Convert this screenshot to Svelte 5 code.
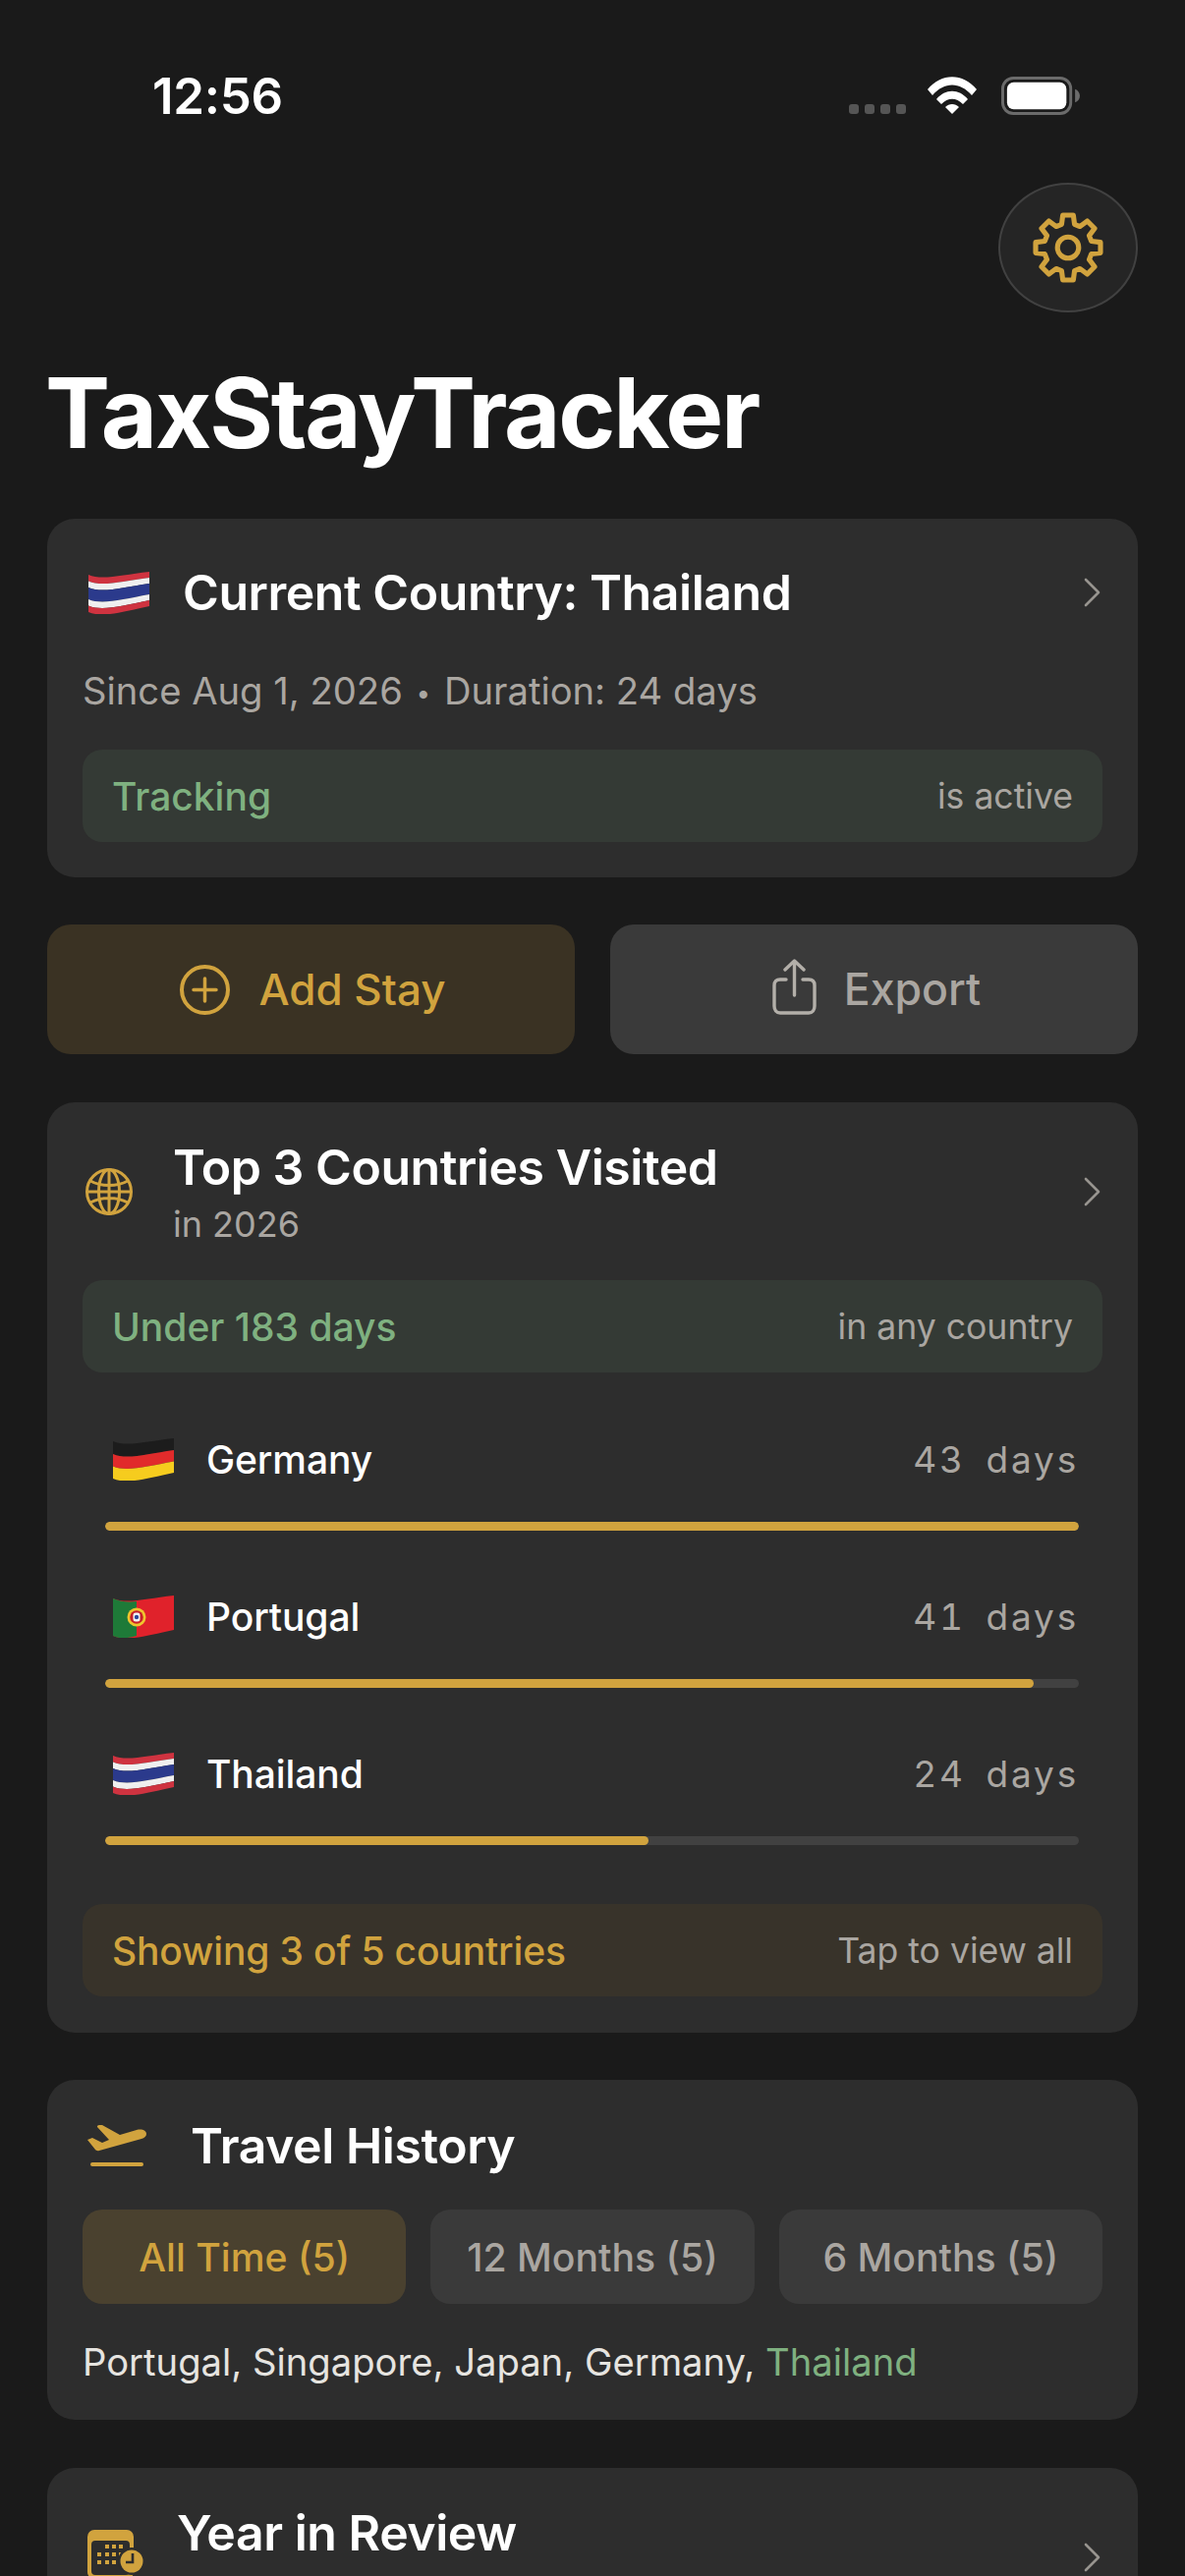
<script>
  const top3 = [
    { name: 'Germany', days: 43, flag: 'de' },
    { name: 'Portugal', days: 41, flag: 'pt' },
    { name: 'Thailand', days: 24, flag: 'th' }
  ];
  const maxDays = Math.max(...top3.map((c) => c.days));
  const tabs = ['12 Months (5)', '6 Months (5)'];

  // wavy band across a 62 wide flag, t0 and t1 run 0..1 down the cloth
  function band(t0, t1) {
    const a = 4 + 38 * t0;
    const b = 4 + 38 * t1;
    return `M0 ${a}C14 ${a + 6} 34 ${a} 62 ${a - 3 - 3 * t0}V${b - 3 - 3 * t1}C34 ${b} 14 ${b + 6} 0 ${b}Z`;
  }

  const stripes = {
    th: [
      ['#cf3340', 0, 0.17],
      ['#efefef', 0.17, 0.34],
      ['#2b3a8c', 0.34, 0.66],
      ['#efefef', 0.66, 0.83],
      ['#cf3340', 0.83, 1]
    ],
    de: [
      ['#1c1c1c', 0, 0.34],
      ['#e12b2b', 0.34, 0.67],
      ['#f6cc1e', 0.67, 1]
    ]
  };

  // 8 tooth gear outline, centre 36,36
  function gearPath() {
    const pts = [];
    for (let i = 0; i < 8; i++) {
      const a = (i * Math.PI) / 4 - Math.PI / 2;
      for (const [off, r] of [[-0.27, 24], [-0.16, 32.5], [0.16, 32.5], [0.27, 24]]) {
        pts.push(`${(36 + r * Math.cos(a + off)).toFixed(1)} ${(36 + r * Math.sin(a + off)).toFixed(1)}`);
      }
    }
    return 'M' + pts.join('L') + 'Z';
  }
</script>

{#snippet flag(code)}
  <svg class="flag" viewBox="0 0 62 44">
    {#if code === 'pt'}
      <path d={band(0, 1)} fill="#e0222b" />
      <path d="M0 4C8 7.5 16 8 24 7V42C16 44 8 46 0 42Z" fill="#1e7a38" />
      <circle cx="24" cy="23" r="9.5" fill="#f0c52e" />
      <circle cx="24" cy="23" r="6.8" fill="#c8202a" />
      <rect x="20.5" y="18.5" width="7" height="9" rx="2.5" fill="#f4f4f4" />
      <circle cx="24" cy="23" r="2.2" fill="#2c479b" />
    {:else}
      {#each stripes[code] as [color, t0, t1]}
        <path d={band(t0, t1)} fill={color} />
      {/each}
    {/if}
  </svg>
{/snippet}

{#snippet chevron()}
  <svg class="chevron" viewBox="0 0 17 30" fill="none">
    <path d="M2 2L15 15L2 28" stroke="#97948f" stroke-width="2.6" stroke-linecap="round" stroke-linejoin="round" />
  </svg>
{/snippet}

<div class="screen">
  <div class="status">
    <span class="time">12:56</span>
    <div class="status-icons">
      <div class="dots"><i></i><i></i><i></i><i></i></div>
      <svg class="wifi" viewBox="0 0 50 38">
        <path d="M0 13C14 -4 36 -4 50 13L45 19C33 5 17 5 5 19Z" fill="#fff" />
        <path d="M9 23C18 12 32 12 41 23L36 28C29 21 21 21 14 28Z" fill="#fff" />
        <path d="M18 31C22 27 28 27 32 31L25 38Z" fill="#fff" />
      </svg>
      <svg class="battery" viewBox="0 0 82 40">
        <rect x="1.5" y="1.5" width="71" height="37" rx="11" fill="none" stroke="#6b6b6b" stroke-width="3" />
        <rect x="6" y="6" width="62" height="28" rx="7" fill="#fff" />
        <path d="M77 13C80 14 82 17 82 20S80 26 77 27Z" fill="#6b6b6b" />
      </svg>
    </div>
  </div>

  <div class="toolbar">
    <button class="gear" aria-label="Settings">
      <svg viewBox="0 0 72 72" fill="none" stroke="#d1a33e" stroke-linejoin="round">
        <path d={gearPath()} stroke-width="5" />
        <circle cx="36" cy="36" r="10.5" stroke-width="5" />
      </svg>
    </button>
  </div>

  <h1>TaxStayTracker</h1>

  <section class="card current">
    <div class="head">
      <span class="lead w-102">{@render flag('th')}</span>
      <h2>Current Country: Thailand</h2>
      {@render chevron()}
    </div>
    <p class="since">Since Aug 1, 2026 <span class="sep">•</span> Duration: 24 days</p>
    <div class="pill green"><span>Tracking</span><small>is active</small></div>
  </section>

  <div class="actions">
    <button class="action add">
      <svg class="plus" viewBox="0 0 51 51" fill="none" stroke="#d1a33e">
        <circle cx="25.5" cy="25.5" r="23.5" stroke-width="4" />
        <path d="M14 25.5H37M25.5 14V37" stroke-width="3.5" stroke-linecap="round" />
      </svg>
      Add Stay
    </button>
    <button class="action export">
      <svg class="share" viewBox="0 0 45 57" fill="none" stroke="#b3afa9" stroke-width="3.4" stroke-linecap="round" stroke-linejoin="round">
        <path d="M14 21H8C4 21 2 23 2 27V48C2 52 4 55 8 55H37C41 55 43 52 43 48V27C43 23 41 21 37 21H31" />
        <path d="M22.5 37V3M13 11L22.5 2L32 11" />
      </svg>
      Export
    </button>
  </div>

  <section class="card top">
    <div class="head tall">
      <span class="lead w-93">
        <svg class="globe" viewBox="0 0 48 48" fill="none" stroke="#d1a33e" stroke-width="3">
          <circle cx="24" cy="24" r="22.5" />
          <ellipse cx="24" cy="24" rx="10.5" ry="22.5" />
          <path d="M24 1.5V46.5M1.5 24H46.5M5 13C16 19 32 19 43 13M5 35C16 29 32 29 43 35" />
        </svg>
      </span>
      <div class="titles">
        <h2>Top 3 Countries Visited</h2>
        <p>in 2026</p>
      </div>
      {@render chevron()}
    </div>
    <div class="pill green under"><span>Under 183 days</span><small>in any country</small></div>
    <div class="rows">
      {#each top3 as c}
        <div class="row">
          <div class="row-line">
            {@render flag(c.flag)}
            <span class="name">{c.name}</span>
            <span class="days">{c.days} days</span>
          </div>
          <div class="track"><div class="fill" style="width: {(c.days / maxDays) * 100}%"></div></div>
        </div>
      {/each}
    </div>
    <div class="pill gold"><span class="showing">Showing 3 of 5 countries</span><small>Tap to view all</small></div>
  </section>

  <section class="card history">
    <div class="head">
      <span class="lead w-110">
        <svg class="plane" viewBox="0 0 60 42" fill="#d1a33e">
          <path d="M0 15L5 13L15 18L22 15L10 2C9.5 1 10.5 0 12 0H15L33 10L50 5C56 3.5 60 6 60 9C60 11.5 58 13 55 14L12 26C10 26.5 9 26 8 25Z" />
          <rect x="3" y="38" width="54" height="4" rx="2" />
        </svg>
      </span>
      <h2>Travel History</h2>
    </div>
    <div class="tabs">
      <button class="tab active">All Time (5)</button>
      {#each tabs as t}
        <button class="tab">{t}</button>
      {/each}
    </div>
    <p class="visited">Portugal, Singapore, Japan, Germany, <em>Thailand</em></p>
  </section>

  <section class="card review">
    <div class="head tall">
      <span class="lead w-96">
        <svg class="calendar" viewBox="0 0 57 57">
          <rect width="47" height="50" rx="7" fill="#d1a33e" />
          <rect x="4" y="11" width="39" height="35" rx="4" fill="#2d2d2d" />
          <g fill="#d1a33e">
            <rect x="18" y="15" width="4" height="4" /><rect x="25" y="15" width="4" height="4" /><rect x="32" y="15" width="4" height="4" />
            <rect x="10" y="23" width="4" height="4" /><rect x="18" y="23" width="4" height="4" /><rect x="25" y="23" width="4" height="4" /><rect x="32" y="23" width="4" height="4" />
            <rect x="10" y="31" width="4" height="4" /><rect x="18" y="31" width="4" height="4" /><rect x="25" y="31" width="4" height="4" />
          </g>
          <circle cx="45" cy="32" r="14" fill="#2d2d2d" />
          <circle cx="45" cy="32" r="11.5" fill="#d1a33e" />
          <path d="M46 24V33H39" fill="none" stroke="#2d2d2d" stroke-width="2.6" />
        </svg>
      </span>
      <div class="titles"><h2>Year in Review</h2></div>
      {@render chevron()}
    </div>
  </section>
</div>

<style>
  :global(body) {
    background: #1a1a1a;
  }

  .screen {
    height: 2622px;
    overflow: hidden;
    padding: 0 48px;
    box-sizing: border-box;
    background: #1a1a1a;
    color: #fff;
    font-family: Inter, 'Liberation Sans', sans-serif;
  }

  button {
    font-family: inherit;
    border: 0;
    padding: 0;
  }

  h1,
  h2,
  p {
    margin: 0;
  }

  .status {
    height: 186px;
    box-sizing: border-box;
    padding: 70px 58px 0 107px;
    display: flex;
    justify-content: space-between;
    align-items: flex-start;
  }

  .time {
    font-size: 51px;
    font-weight: 600;
    line-height: 56px;
    letter-spacing: -0.3px;
  }

  .status-icons {
    display: flex;
    align-items: flex-start;
    padding-top: 8px;
  }

  .dots {
    display: flex;
    gap: 6px;
    margin-top: 28px;
    margin-right: 22px;
  }

  .dots i {
    width: 10px;
    height: 10px;
    border-radius: 3px;
    background: #555;
  }

  .wifi {
    width: 50px;
    height: 38px;
    margin-right: 24px;
  }

  .battery {
    width: 82px;
    height: 39px;
  }

  .toolbar {
    display: flex;
    justify-content: flex-end;
  }

  .gear {
    width: 142px;
    height: 132px;
    border-radius: 50%;
    background: #252525;
    border: 2px solid #414141;
    box-sizing: border-box;
    display: flex;
    align-items: center;
    justify-content: center;
  }

  .gear svg {
    width: 74px;
    height: 74px;
  }

  h1 {
    margin: 42px 0 48px -2px;
    font-size: 99px;
    line-height: 120px;
    font-weight: 700;
    letter-spacing: -2.2px;
  }

  .card {
    background: #2d2d2d;
    border-radius: 28px;
    padding: 0 36px;
    margin-bottom: 49px;
  }

  .head {
    display: flex;
    align-items: center;
    height: 60px;
  }

  .head.tall {
    height: 110px;
  }

  .lead {
    flex: none;
    display: flex;
    align-items: center;
    padding-left: 6px;
    box-sizing: border-box;
  }

  .w-102 {
    width: 102px;
  }

  .w-93 {
    width: 92px;
    padding-left: 3px;
  }

  .w-110 {
    width: 110px;
    padding-left: 5px;
  }

  .w-96 {
    width: 96px;
    padding-left: 5px;
  }

  .flag {
    width: 62px;
    height: 44px;
    flex: none;
  }

  h2 {
    font-size: 50px;
    line-height: 60px;
    font-weight: 600;
    letter-spacing: -0.45px;
  }

  .titles {
    align-self: flex-start;
  }

  .titles p {
    margin-top: 6px;
    font-size: 36px;
    line-height: 44px;
    color: #aaa6a1;
  }

  .chevron {
    width: 17px;
    height: 30px;
    margin-left: auto;
    margin-right: 2px;
    flex: none;
  }

  .pill {
    height: 94px;
    border-radius: 20px;
    padding: 0 30px;
    display: flex;
    align-items: center;
    justify-content: space-between;
    font-size: 39px;
    font-weight: 500;
  }

  .pill small {
    font-size: 35.6px;
    font-weight: 400;
    color: #aaa6a1;
  }

  .green {
    background: #343a35;
    color: #7fb180;
  }

  .under {
    margin-top: 35px;
  }

  .gold {
    background: #38332a;
    color: #d1a33e;
  }

  .showing {
    letter-spacing: -0.15px;
  }

  .current {
    padding-top: 45px;
    padding-bottom: 36px;
    margin-bottom: 48px;
  }

  .since {
    height: 50px;
    margin: 45px 0 35px;
    font-size: 38.2px;
    line-height: 50px;
    color: #aaa6a1;
  }

  .sep {
    font-size: 26px;
    line-height: 0;
    vertical-align: 2px;
    padding: 0 3px;
  }

  .actions {
    display: grid;
    grid-template-columns: 1fr 1fr;
    gap: 36px;
    margin-bottom: 49px;
  }

  .action {
    height: 132px;
    border-radius: 24px;
    display: flex;
    align-items: center;
    justify-content: center;
    font-weight: 500;
  }

  .add {
    background: #3a3223;
    color: #d1a33e;
    gap: 29px;
    font-size: 44px;
    padding-left: 4px;
  }

  .export {
    background: #3a3a3a;
    color: #aaa6a1;
    gap: 28px;
    font-size: 44.6px;
    padding-left: 5px;
  }

  .plus {
    width: 51px;
    height: 51px;
  }

  .share {
    width: 45px;
    height: 57px;
    margin-top: -6px;
  }

  .top {
    padding-top: 36px;
    padding-bottom: 37px;
    margin-bottom: 48px;
  }

  .globe {
    width: 48px;
    height: 48px;
  }

  .rows {
    padding: 58px 24px 60px 23px;
    display: grid;
    gap: 57px;
  }

  .row-line {
    height: 60px;
    display: flex;
    align-items: center;
    padding: 0 0 0 8px;
    margin-bottom: 34px;
  }

  .name {
    margin-left: 33px;
    font-size: 39px;
    font-weight: 500;
    letter-spacing: -0.1px;
  }

  .days {
    margin-left: auto;
    font-size: 37px;
    letter-spacing: 2.8px;
    word-spacing: 8px;
    color: #aaa6a1;
    font-variant-numeric: tabular-nums;
  }

  .track {
    height: 9px;
    border-radius: 5px;
    background: #414141;
    overflow: hidden;
  }

  .fill {
    height: 100%;
    border-radius: 5px;
    background: #d1a33e;
  }

  .history {
    padding-top: 37px;
    padding-bottom: 34px;
  }

  .plane {
    width: 60px;
    height: 42px;
  }

  .tabs {
    display: grid;
    grid-template-columns: repeat(3, 1fr);
    gap: 25px;
    margin-top: 35px;
  }

  .tab {
    height: 96px;
    border-radius: 20px;
    background: #3a3a3a;
    color: #aaa6a1;
    font-size: 39.2px;
    font-weight: 500;
  }

  .tab.active {
    background: #4a412f;
    color: #d1a33e;
  }

  .visited {
    margin-top: 34px;
    font-size: 38.2px;
    line-height: 50px;
    color: #e6e4e0;
  }

  .visited em {
    font-style: normal;
    color: #7fb180;
  }

  .review {
    padding-top: 36px;
    padding-bottom: 36px;
    margin-bottom: 0;
  }

  .calendar {
    width: 57px;
    height: 57px;
  }
</style>
